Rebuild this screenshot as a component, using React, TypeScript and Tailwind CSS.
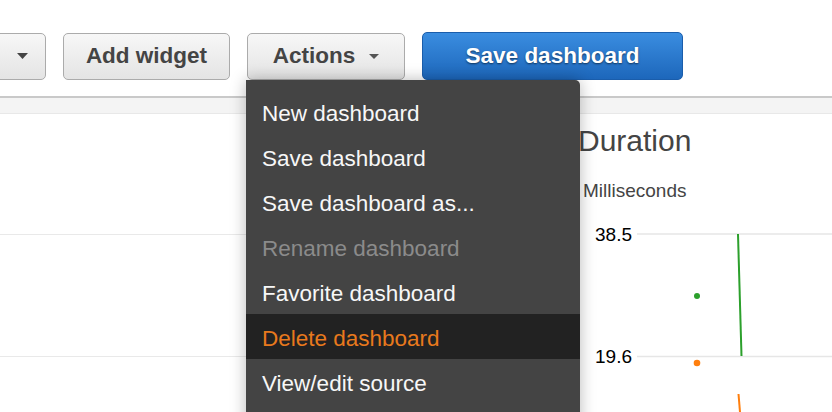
import React from "react";

const Caret = ({ w = 10, h = 6, color = "#444" }: { w?: number; h?: number; color?: string }) => (
  <svg width={w} height={h} viewBox={`0 0 ${w} ${h}`} className="block">
    <polygon points={`0,0 ${w},0 ${w / 2},${h}`} fill={color} />
  </svg>
);

const grayBtn =
  "h-[47px] shrink-0 flex items-center rounded-[5px] border border-[#ababab] bg-gradient-to-b from-[#f7f7f7] to-[#e4e4e4] text-[#444] font-bold text-[22.5px]";

const items: { label: string; kind?: "disabled" | "active" }[] = [
  { label: "New dashboard" },
  { label: "Save dashboard" },
  { label: "Save dashboard as..." },
  { label: "Rename dashboard", kind: "disabled" },
  { label: "Favorite dashboard" },
  { label: "Delete dashboard", kind: "active" },
  { label: "View/edit source" },
];

export default function App() {
  return (
    <div
      className="relative w-[832px] h-[412px] overflow-hidden bg-white"
      style={{ fontFamily: '"Liberation Sans", Arial, Helvetica, sans-serif' }}
    >
      {/* Toolbar */}
      <div className="h-[98px] pt-[32px] border-b-2 border-[#c9c9c9]">
        <div className="h-[48px] flex items-center gap-[17px]">
          <div className={`${grayBtn} w-[150px] ml-[-104px] justify-end pr-[17px]`}>
            <Caret w={11} h={6} color="#444" />
          </div>
          <div className={`${grayBtn} w-[167px] justify-center`}>Add widget</div>
          <div className={`${grayBtn} w-[158px] justify-center gap-[14px]`}>
            <span>Actions</span>
            <Caret w={10} h={5} color="#555" />
          </div>
          <div className="h-[48px] w-[261px] shrink-0 flex items-center justify-center rounded-[5px] border border-[#1a5dab] bg-gradient-to-b from-[#3a8de0] to-[#1d67bb] text-white font-bold text-[22.5px] [text-shadow:0_1px_2px_rgba(0,0,0,0.55)]">
            Save dashboard
          </div>
        </div>
      </div>
      {/* Grey band */}
      <div className="h-[16px] bg-[#f4f4f4] border-b border-[#e8e8e8]" />

      {/* Content */}
      <div className="flex">
        <div className="w-[578px] shrink-0">
          <div className="h-[121px] border-b border-[#e9e9e9]" />
          <div className="h-[122px] border-b border-[#e9e9e9]" />
        </div>
        <div className="flex-1 pt-[10px]">
          <div className="text-[30px] leading-[34px] text-[#444]">Duration</div>
          <div className="mt-[22px] ml-[5px] text-[19px] leading-[22px] text-[#444]">Milliseconds</div>
          <svg width="254" height="210" viewBox="0 0 254 210" className="block">
            <line x1="59" y1="32" x2="254" y2="32" stroke="#e6e6e6" strokeWidth="1.5" />
            <line x1="59" y1="154.5" x2="254" y2="154.5" stroke="#e6e6e6" strokeWidth="1.5" />
            <text x="54" y="38.7" textAnchor="end" fontSize="19" fill="#000">38.5</text>
            <text x="54" y="161" textAnchor="end" fontSize="19" fill="#000">19.6</text>
            <line x1="160" y1="32" x2="163.5" y2="154" stroke="#2ca02c" strokeWidth="2" />
            <circle cx="119" cy="94" r="3" fill="#2ca02c" />
            <circle cx="119" cy="161" r="3.3" fill="#ff7f0e" />
            <line x1="160.5" y1="192" x2="162" y2="210" stroke="#ff7f0e" strokeWidth="2" />
          </svg>
        </div>
      </div>

      {/* Actions dropdown menu */}
      <div className="absolute left-[246px] top-[80px] w-[334px] h-[360px] bg-[#444] rounded-tr-[5px] shadow-[0_0_16px_rgba(0,0,0,0.28)] pt-[9px]">
        {items.map((it) => (
          <div
            key={it.label}
            className={`h-[45px] flex items-center pl-[16px] pt-[5px] text-[22.5px] ${
              it.kind === "active"
                ? "bg-[#222] text-[#e8791d]"
                : it.kind === "disabled"
                ? "text-[#8b8b8b]"
                : "text-[#f7f7f7]"
            }`}
          >
            {it.label}
          </div>
        ))}
      </div>
    </div>
  );
}
